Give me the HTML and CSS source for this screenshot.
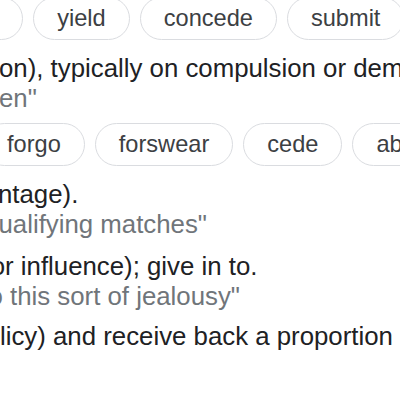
FILE: index.html
```html
<!DOCTYPE html>
<html>
<head>
<meta charset="utf-8">
<link rel="stylesheet" href="styles.css">
</head>
<body>
<div class="page">
  <div class="chips chips-1">
    <span class="chip">give in</span>
    <span class="chip">yield</span>
    <span class="chip">concede</span>
    <span class="chip">submit</span>
    <span class="chip">acquiesce</span>
  </div>
  <div class="sense sense-1">
    <div class="def d1">on), typically on compulsion or demand.</div>
    <div class="ex e1">en"</div>
  </div>
  <div class="chips chips-2">
    <span class="chip">forgo</span>
    <span class="chip">forswear</span>
    <span class="chip">cede</span>
    <span class="chip">abdicate</span>
  </div>
  <div class="sense sense-2">
    <div class="def d2">ntage).</div>
    <div class="ex e2">ualifying matches"</div>
  </div>
  <div class="sense sense-3">
    <div class="def d3">or influence); give in to.</div>
    <div class="ex e3">o this sort of jealousy"</div>
  </div>
  <div class="sense sense-4">
    <div class="def d4">licy) and receive back a proportion of the premiums paid.</div>
  </div>
</div>
</body>
</html>
```
FILE: styles.css
```css
html, body {
  margin: 0;
  padding: 0;
  background: #ffffff;
  overflow: hidden;
  width: 400px;
  height: 400px;
}

.page {
  font-family: "Liberation Sans", Arial, sans-serif;
  font-size: 23.6px;
  display: flex;
  flex-direction: column;
  white-space: nowrap;
}

.chips {
  display: flex;
  gap: 10px;
}

.chips-1 {
  margin-top: -3px;
  margin-left: -93px;
}

.chips-2 {
  margin-top: 10px;
  margin-left: -17px;
}

.chip {
  flex: none;
  border: 1px solid #dadce0;
  border-radius: 24px;
  padding: 0 23px;
  line-height: 41px;
  color: #3c4043;
}

.sense {
  display: flex;
  flex-direction: column;
  font-size: 25.8px;
}

.sense-1 { margin-top: 13px; }
.sense-2 { margin-top: 13px; }
.sense-3 { margin-top: 12px; }
.sense-4 { margin-top: 10px; }

.def {
  color: #202124;
  line-height: 30px;
}

.ex {
  color: #70757a;
  line-height: 30px;
}

.d1 { margin-left: -1px; }
.e1 { margin-left: -1px; }
.d2 { margin-left: -2px; }
.e2 { margin-left: -1.5px; }
.d3 { margin-left: -9.3px; }
.e3 { margin-left: -11.5px; }
.d4 { margin-left: 0; }
```
